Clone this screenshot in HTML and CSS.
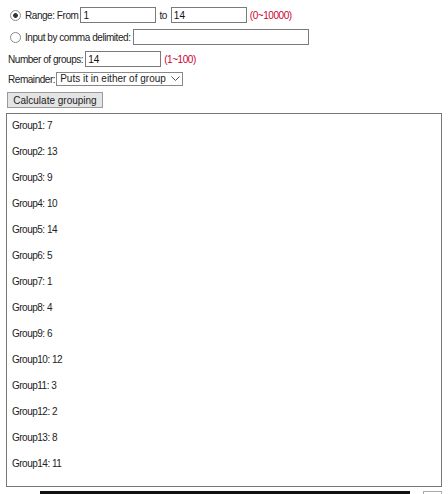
FILE: index.html
```html
<!DOCTYPE html>
<html>
<head>
<meta charset="utf-8">
<link rel="stylesheet" href="styles.css">
</head>
<body>
<div class="page">
  <div class="row r1">
    <input type="radio" name="mode" class="radio" checked>
    <span class="lbl">Range: From</span>
    <input type="text" class="txt w76" value="1">
    <span class="lbl to">to</span>
    <input type="text" class="txt w76" value="14">
    <span class="note">(0~10000)</span>
  </div>
  <div class="row r2">
    <input type="radio" name="mode" class="radio">
    <span class="lbl">Input by comma delimited:</span>
    <input type="text" class="txt w176" value="">
  </div>
  <div class="row r3">
    <span class="lbl">Number of groups:</span>
    <input type="text" class="txt w76" value="14">
    <span class="note">(1~100)</span>
  </div>
  <div class="row r4">
    <span class="lbl">Remainder:</span>
    <span class="sel-wrap">
      <select class="sel"><option>Puts it in either of group</option></select>
      <svg class="chev" width="9" height="6" viewBox="0 0 9 6"><path d="M0.5 0.5 L4.5 4.5 L8.5 0.5" fill="none" stroke="#555" stroke-width="1"/></svg>
    </span>
  </div>
  <div class="row r5">
    <button class="btn">Calculate grouping</button>
  </div>
  <div class="result">
    <div class="item">Group1: 7</div>
    <div class="item">Group2: 13</div>
    <div class="item">Group3: 9</div>
    <div class="item">Group4: 10</div>
    <div class="item">Group5: 14</div>
    <div class="item">Group6: 5</div>
    <div class="item">Group7: 1</div>
    <div class="item">Group8: 4</div>
    <div class="item">Group9: 6</div>
    <div class="item">Group10: 12</div>
    <div class="item">Group11: 3</div>
    <div class="item">Group12: 2</div>
    <div class="item">Group13: 8</div>
    <div class="item">Group14: 11</div>
  </div>
  <div class="bottom">
    <div class="bar"></div>
    <div class="mini"></div>
  </div>
</div>
</body>
</html>
```
FILE: styles.css
```css
html, body {
  margin: 0;
  padding: 0;
  background: #fff;
}
body {
  font-family: "Liberation Sans", Arial, sans-serif;
  font-size: 10px;
  color: #222;
  overflow: hidden;
}
.page {
  padding: 7px 0 0 8px;
  width: 434px;
}
.row {
  display: flex;
  align-items: center;
  height: 16px;
}
.r1 { margin-bottom: 6px; }
.r2 { margin-bottom: 6px; }
.r3 { margin-bottom: 5px; }
.r4 { height: 14px; margin-bottom: 6px; }
.r5 { margin-bottom: 5px; margin-left: -1px; }
.lbl { white-space: nowrap; letter-spacing: -0.45px; }
.to { margin: 0 2px 0 3px; }
.radio {
  appearance: none;
  -webkit-appearance: none;
  box-sizing: border-box;
  width: 11px;
  height: 11px;
  margin: 0 4px 0 2px;
  border: 1px solid #8a8a8a;
  border-radius: 50%;
  background: #fff;
  flex: none;
}
.radio:checked {
  background: radial-gradient(circle, #333 0 2px, #fff 2.7px);
}
.txt {
  box-sizing: border-box;
  height: 16px;
  border: 1px solid #7a7a7a;
  padding: 0 2px;
  margin: 0 0 0 2px;
  font-family: "Liberation Sans", Arial, sans-serif;
  font-size: 10px;
  color: #111;
  outline: none;
}
.w76 { width: 76px; }
.w176 { width: 176px; margin-left: 3px; }
.note {
  color: #cc0033;
  margin-left: 3px;
  letter-spacing: -0.45px;
}
.sel-wrap {
  position: relative;
  margin-left: 1px;
  display: inline-flex;
}
.sel {
  appearance: none;
  -webkit-appearance: none;
  box-sizing: border-box;
  width: 127px;
  height: 14px;
  border: 1px solid #888;
  border-radius: 0;
  background: #fff;
  padding: 0 12px 0 3px;
  font-family: "Liberation Sans", Arial, sans-serif;
  font-size: 10px;
  line-height: 12px;
  color: #222;
}
.chev {
  position: absolute;
  right: 3px;
  top: 4px;
}
.btn {
  box-sizing: border-box;
  height: 16px;
  width: 96px;
  padding: 0;
  border: 1px solid #9a9a9a;
  border-radius: 0;
  background: #e4e4e4;
  font-family: "Liberation Sans", Arial, sans-serif;
  font-size: 10px;
  color: #222;
}
.result {
  box-sizing: border-box;
  margin-left: -2px;
  width: 436px;
  height: 374px;
  border: 1px solid #777;
  padding: 0 5px 0 5px;
}
.item {
  height: 26px;
  line-height: 23px;
  letter-spacing: -0.5px;
}
.bottom {
  display: flex;
  margin-top: 4px;
  margin-left: 32px;
}
.bar {
  width: 370px;
  height: 3px;
  background: #111;
}
.mini {
  width: 17px;
  height: 6px;
  border: 1px solid #aaa;
  border-bottom: none;
  margin-left: 13px;
}
```
